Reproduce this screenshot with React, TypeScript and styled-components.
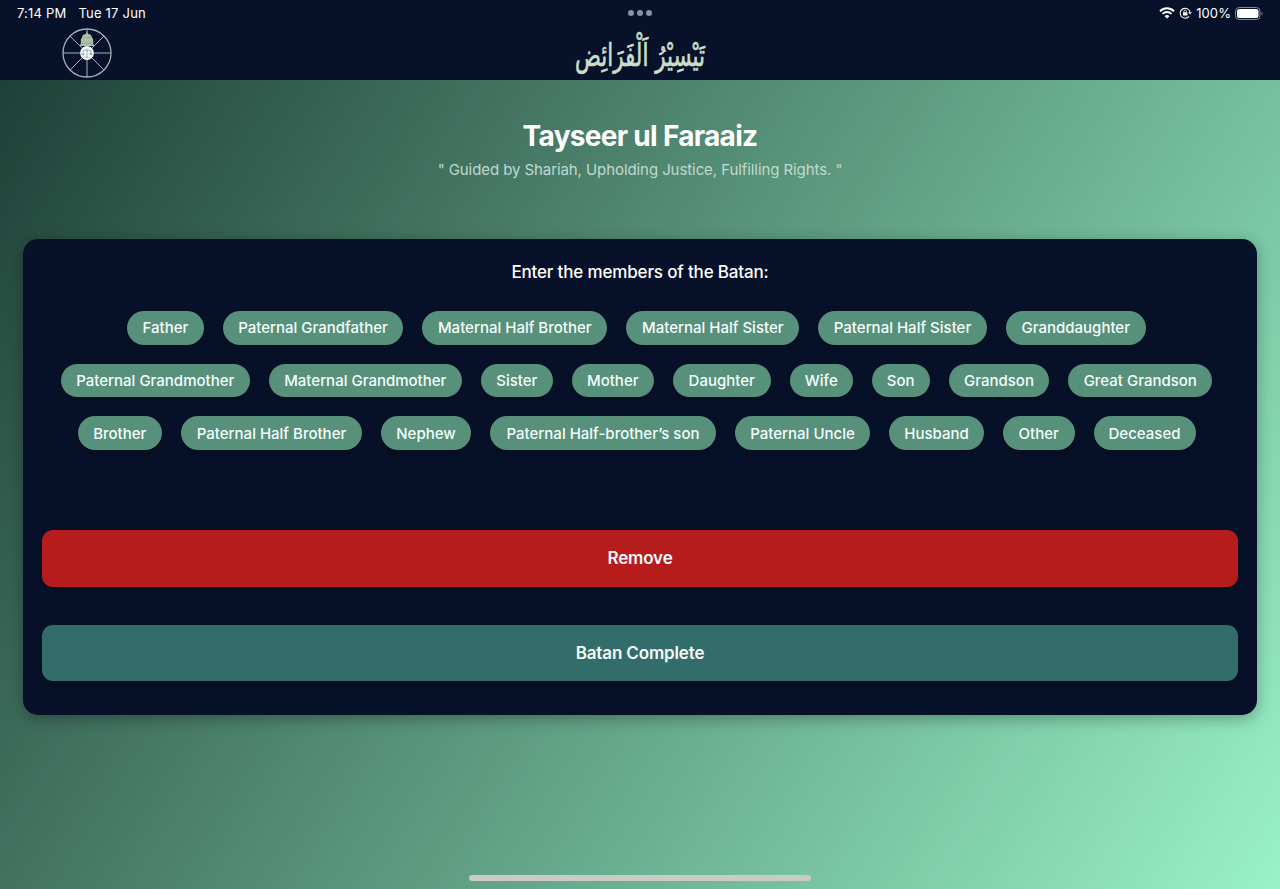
import React from "react";
import styled, { createGlobalStyle } from "styled-components";

const GlobalStyle = createGlobalStyle`
  * { box-sizing: border-box; }
  body { margin: 0; font-family: Inter, "Liberation Sans", sans-serif; background: #07122a; }
  button { font-family: inherit; border: 0; cursor: pointer; }
`;

const Screen = styled.div`
  width: 100%;
  height: 889px;
  display: flex;
  flex-direction: column;
  overflow: hidden;
  color: #fff;
`;

const StatusBar = styled.div`
  height: 26px;
  padding: 0 17px;
  display: grid;
  grid-template-columns: 1fr auto 1fr;
  align-items: center;
  font-size: 13px;
  line-height: 26px;
  letter-spacing: 0.2px;
`;

const StatusLeft = styled.div`
  display: flex;
  gap: 12px;
`;

const StatusRight = styled.div`
  display: flex;
  justify-content: flex-end;
  align-items: center;
  gap: 4px;
  letter-spacing: 0.1px;
`;

const Dots = styled.div`
  display: flex;
  gap: 3px;
  span { width: 6px; height: 6px; border-radius: 50%; background: #8a91a6; }
`;

const Header = styled.header`
  height: 54px;
  flex: none;
  padding: 2px 62px 0;
  display: grid;
  grid-template-columns: 1fr auto 1fr;
  align-items: start;
`;

const Wordmark = styled.svg`
  display: block;
  overflow: visible;
`;

const Main = styled.main`
  flex: 1;
  display: flex;
  flex-direction: column;
  align-items: center;
  padding: 37px 23px 0;
  background: linear-gradient(122.3deg, #1f4037 0%, #99f2c8 100%);
`;

const Title = styled.h1`
  margin: 0;
  font-size: 28px;
  line-height: 38px;
  font-weight: 700;
  letter-spacing: -0.7px;
`;

const Tagline = styled.p`
  margin: 4px 0 0;
  font-size: 15px;
  line-height: 21px;
  letter-spacing: -0.08px;
  color: #c0dace;
`;

const Panel = styled.section`
  width: 100%;
  height: 476.4px;
  margin-top: 59px;
  padding: 22px 19px 34px;
  display: flex;
  flex-direction: column;
  border-radius: 15px;
  background: #07122a;
  box-shadow: 0 4px 15px rgba(0, 0, 0, 0.3);
`;

const Prompt = styled.p`
  margin: 0;
  text-align: center;
  font-size: 17px;
  line-height: 22px;
  font-weight: 450;
  letter-spacing: -0.16px;
`;

const ChipRows = styled.div`
  margin: 28px 7px 0 0;
  display: flex;
  flex-direction: column;
  gap: 19px;
`;

const ChipRow = styled.div`
  display: flex;
  justify-content: center;
  gap: 19px;
`;

const Chip = styled.button<{ $width: number }>`
  flex: none;
  width: ${(p) => p.$width}px;
  height: 33.7px;
  padding: 0;
  border-radius: 17px;
  background: #57907b;
  color: #f4fffb;
  font-size: 15px;
  font-weight: 500;
  white-space: nowrap;
  box-shadow: 0 4px 10px rgba(0, 0, 0, 0.3);
`;

const Actions = styled.div`
  margin-top: auto;
  display: flex;
  flex-direction: column;
  gap: 38px;
`;

const Action = styled.button<{ $tone: string }>`
  height: 56.8px;
  padding: 0;
  border-radius: 11px;
  background: ${(p) => p.$tone};
  color: #f6fbfa;
  font-size: 17px;
  font-weight: 600;
  letter-spacing: -0.15px;
  box-shadow: 0 4px 10px rgba(0, 0, 0, 0.3);
`;

const HomeBar = styled.div`
  width: 342px;
  height: 6px;
  margin: auto 0 8px;
  border-radius: 3px;
  background: #c8cbc8;
`;

const rows: [string, number][][] = [
  [["Father", 76.5], ["Paternal Grandfather", 180.5], ["Maternal Half Brother", 185], ["Maternal Half Sister", 173], ["Paternal Half Sister", 168.5], ["Granddaughter", 140]],
  [["Paternal Grandmother", 189], ["Maternal Grandmother", 193], ["Sister", 72], ["Mother", 82], ["Daughter", 98], ["Wife", 63], ["Son", 58], ["Grandson", 100.5], ["Great Grandson", 144]],
  [["Brother", 84.5], ["Paternal Half Brother", 181], ["Nephew", 90], ["Paternal Half-brother’s son", 226], ["Paternal Uncle", 135], ["Husband", 95], ["Other", 71.5], ["Deceased", 102]],
];

const WheelLogo = () => (
  <svg width="50" height="50" viewBox="0 0 50 50" fill="none">
    <g stroke="#a3b1b7" strokeWidth="1">
      <circle cx="25" cy="25" r="24" strokeWidth="1.3" />
      <path d="M25 1V49M1 25H49M8 8L42 42M42 8L8 42" />
    </g>
    <path d="M25 2.600l.8 3.200c2.600.4 4 1.600 4.200 3.600l1.200 2v4.300l1.300 2.300h-15l1.300-2.300v-4.300l1.200-2c.2-2 1.600-3.200 4.200-3.600z" fill="#a9bfa9" />
    <path d="M20.500 9.500h9M19 15.400h12" stroke="#8fa894" strokeWidth=".6" />
    <circle cx="25" cy="25" r="6.900" fill="#f8fbfb" />
    <path d="M25 20.500V29.300M22.800 29.400h4.400M21 22.300h8M21 22.500v3.500M29 22.500v3.500" stroke="#8494a0" strokeWidth=".7" />
    <path d="M19.500 25.500h3a1.500 1.500 0 0 1-3 0zM27.500 25.500h3a1.500 1.500 0 0 1-3 0z" fill="#8494a0" />
  </svg>
);

const WifiIcon = () => (
  <svg width="16" height="12" viewBox="0 0 16 12" fill="none" stroke="#fff" strokeWidth="2">
    <path d="M1 4.200a10 10 0 0 1 14 0M3.500 6.900a6.400 6.400 0 0 1 9 0" />
    <path d="M8 11.600L5.600 9.200a3.400 3.400 0 0 1 4.800 0z" fill="#fff" stroke="none" />
  </svg>
);

const RotationLockIcon = () => (
  <svg width="13" height="12" viewBox="0 0 13 12" fill="none" stroke="#fff">
    <path d="M10.100 9.300a5 5 0 1 1 1-3.800" strokeWidth="1.100" />
    <path d="M9.300 5.200h3.500L11.100 7.500z" fill="#fff" stroke="none" />
    <rect x="4" y="5.300" width="4.400" height="3.200" rx=".5" fill="#fff" stroke="none" />
    <path d="M4.900 5.400V4.400a1.300 1.300 0 0 1 2.600 0v1" strokeWidth=".8" />
  </svg>
);

const BatteryIcon = () => (
  <svg width="28" height="13" viewBox="0 0 28 13">
    <rect x=".5" y=".5" width="24.500" height="12" rx="3.600" fill="none" stroke="#7f8699" />
    <rect x="2" y="2" width="21.500" height="9" rx="2.300" fill="#fff" />
    <path d="M26.500 4.500c1.400.6 1.400 3.400 0 4z" fill="#7f8699" />
  </svg>
);

export default function App() {
  return (
    <Screen>
      <GlobalStyle />
      <StatusBar>
        <StatusLeft>
          <span>7:14 PM</span>
          <span>Tue 17 Jun</span>
        </StatusLeft>
        <Dots><span /><span /><span /></Dots>
        <StatusRight>
          <WifiIcon />
          <RotationLockIcon />
          <span>100%</span>
          <BatteryIcon />
        </StatusRight>
      </StatusBar>
      <Header>
        <WheelLogo />
        <Wordmark
          width="132"
          height="48"
          viewBox="0 0 132 48"
          fontFamily="DejaVu Sans, sans-serif"
          fill="#c9dfc8"
          stroke="#c9dfc8"
          strokeWidth=".7"
          textAnchor="middle"
        >
          <text x="66" y="38" direction="rtl" textLength="130" lengthAdjust="spacingAndGlyphs" fontSize="31">تَيْسِيْرُ اَلْفَرَائِض</text>
        </Wordmark>
      </Header>
      <Main>
        <Title>Tayseer ul Faraaiz</Title>
        <Tagline>" Guided by Shariah, Upholding Justice, Fulfilling Rights. "</Tagline>
        <Panel>
          <Prompt>Enter the members of the Batan:</Prompt>
          <ChipRows>
            {rows.map((row, i) => (
              <ChipRow key={i}>
                {row.map(([label, width]) => (
                  <Chip key={label} $width={width}>{label}</Chip>
                ))}
              </ChipRow>
            ))}
          </ChipRows>
          <Actions>
            <Action $tone="#b71c1c">Remove</Action>
            <Action $tone="#336d6b">Batan Complete</Action>
          </Actions>
        </Panel>
        <HomeBar />
      </Main>
    </Screen>
  );
}
